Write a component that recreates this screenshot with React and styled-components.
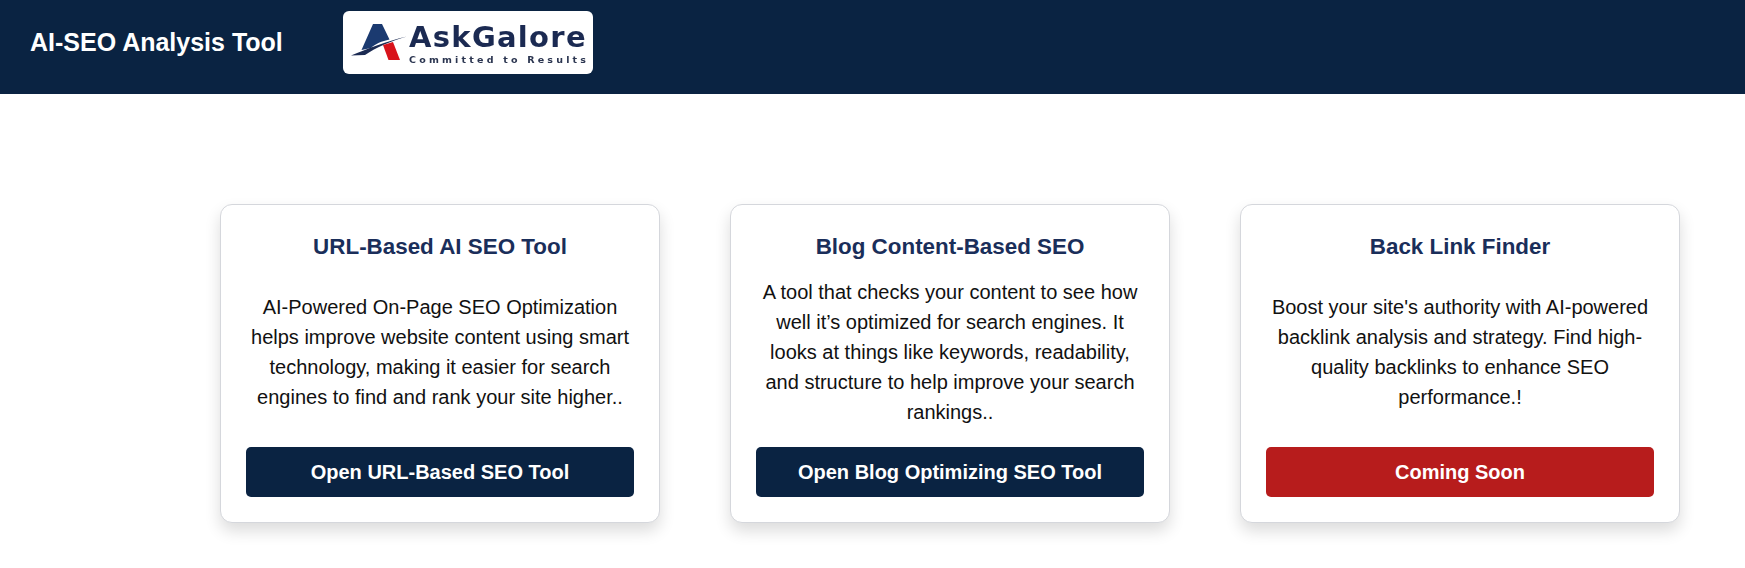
import React from 'react';
import styled, { createGlobalStyle } from 'styled-components';

const Global = createGlobalStyle`
  html, body { margin: 0; padding: 0; background: #fff; }
  body { font-family: "Liberation Sans", Arial, sans-serif; }
`;
const Header = styled.header`
  height: 94px; background: #0a2342; display: flex; align-items: flex-start; padding: 11px 0 0 30px; box-sizing: border-box;
`;
const Title = styled.h1`
  margin: 17px 60px 0 0; width: 253px; white-space: nowrap; color: #fff; font-size: 25px; line-height: 28px; font-weight: 700;
`;
const Logo = styled.div`
  width: 250px; height: 63px; background: #fff; border-radius: 6px; display: flex; align-items: center;
  box-sizing: border-box; padding: 0 0 0 2px;
`;
const LogoText = styled.div`
  display: flex; flex-direction: column; color: #1b2a52; filter: blur(0.4px); padding-top: 2px;
`;
const LogoName = styled.span`
  font: 700 29px/30px "DejaVu Sans", sans-serif; letter-spacing: 1.3px; white-space: nowrap;
`;
const LogoTag = styled.span`
  font: 700 9.5px/12px "DejaVu Sans", sans-serif; letter-spacing: 3.2px; white-space: nowrap; color: #2b3550; margin-top: 2px;
`;
const Cards = styled.main`
  display: grid; grid-template-columns: repeat(3, 440px); gap: 70px; padding: 110px 0 45px 220px;
`;
const Card = styled.section`
  box-sizing: border-box; height: 319px; padding: 24px 25px 25px; background: #fff; border: 1px solid #d5d7dc; border-radius: 12px;
  box-shadow: 0 8px 16px rgba(0,0,0,0.14); display: flex; flex-direction: column; align-items: stretch; text-align: center;
`;
const CardTitle = styled.h2`
  margin: 0; font-size: 22.4px; line-height: 36px; font-weight: 700; color: #1a2e5a;
`;
const Desc = styled.p`
  flex: 1; margin: 0; padding-bottom: 9px; display: flex; align-items: center; justify-content: center; font-size: 20px; line-height: 30px; color: #111;
`;
const Action = styled.button`
  height: 50px; border: 0; border-radius: 5px; background: ${p => p.$bg}; color: #fff; font: 700 20px "Liberation Sans", Arial, sans-serif;
`;

const Mark = () => (
  <svg width="64" height="50" viewBox="0 0 64 50" style={{ filter: 'blur(0.4px)' }}>
    <path d="M28 6 H37 L44.5 21.5 C37 23 30 26 26 30 L16.5 32 Z" fill="#1b3a70" />
    <path d="M6 37.5 C22 31 42 23 62 18.5 C46 23 30 30 20 37 Z" fill="#1b2a52" />
    <path d="M38 27 L48 24 L55 42 H43.5 Z" fill="#d8131b" />
  </svg>
);

const data = [
  { t: 'URL-Based AI SEO Tool', d: 'AI-Powered On-Page SEO Optimization helps improve website content using smart technology, making it easier for search engines to find and rank your site higher..', b: 'Open URL-Based SEO Tool', c: '#0a2342' },
  { t: 'Blog Content-Based SEO', d: 'A tool that checks your content to see how well it’s optimized for search engines. It looks at things like keywords, readability, and structure to help improve your search rankings..', b: 'Open Blog Optimizing SEO Tool', c: '#0a2342' },
  { t: 'Back Link Finder', d: "Boost your site's authority with AI-powered backlink analysis and strategy. Find high-quality backlinks to enhance SEO performance.!", b: 'Coming Soon', c: '#b71c1c' },
];

export default function App() {
  return (
    <>
      <Global />
      <Header>
        <Title>AI-SEO Analysis Tool</Title>
        <Logo>
          <Mark />
          <LogoText>
            <LogoName>AskGalore</LogoName>
            <LogoTag>Committed to Results</LogoTag>
          </LogoText>
        </Logo>
      </Header>
      <Cards>
        {data.map(x => (
          <Card key={x.t}>
            <CardTitle>{x.t}</CardTitle>
            <Desc>{x.d}</Desc>
            <Action $bg={x.c}>{x.b}</Action>
          </Card>
        ))}
      </Cards>
    </>
  );
}
